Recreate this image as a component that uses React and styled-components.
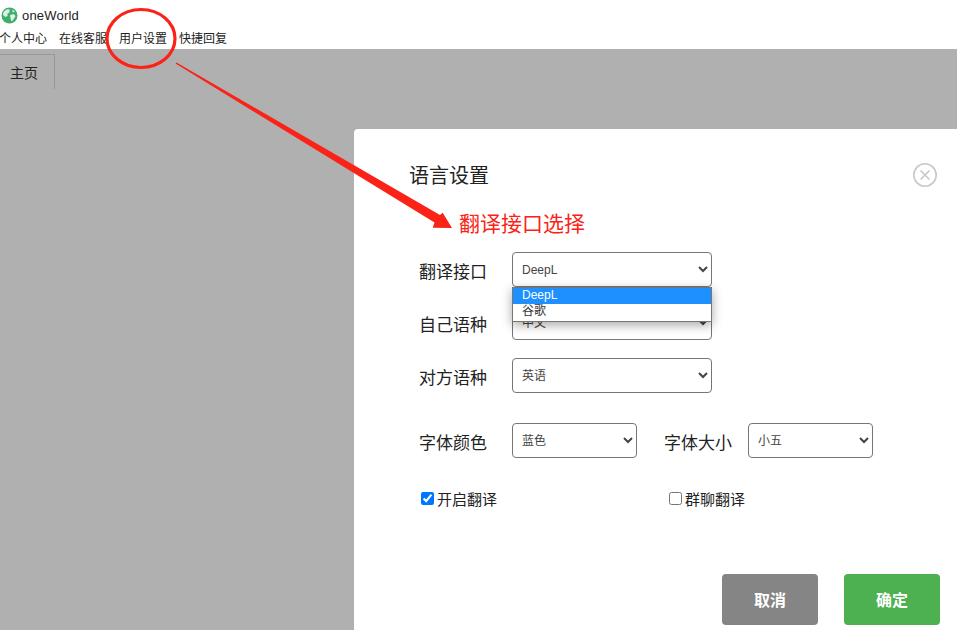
import React from 'react';
import styled, { createGlobalStyle } from 'styled-components';

const GlobalStyle = createGlobalStyle`
  html, body {
    margin: 0;
    height: 100%;
    overflow: hidden;
    background: #fff;
    font-family: 'Liberation Sans', 'Noto Sans CJK SC', sans-serif;
  }
  #root {
    height: 100%;
  }
`;

const Logo = () => (
  <svg width="17" height="17" viewBox="0 0 17 17">
    <circle cx="8.5" cy="8.5" r="8" fill="#3dae6c" />
    <path
      d="M2.5 5 L5.5 2.5 L8.5 2.2 L8.5 5.5 L6.5 6.5 L6.5 9 L4.5 10 L2 8 Z M9 8 L12.5 7 L14.5 9 L12.5 12.5 L10.5 14.5 L9.5 11.5 Z M11 2.5 L14 4.5 L12 5.5 Z"
      fill="#dff1e6"
    />
  </svg>
);

const App = () => {
  return (
    <Page>
      <GlobalStyle />
      <Header>
        <Brand>
          <Logo />
          <span>oneWorld</span>
        </Brand>
        <Menu>
          <MenuItem>个人中心</MenuItem>
          <MenuItem>在线客服</MenuItem>
          <MenuItem>用户设置</MenuItem>
          <MenuItem>快捷回复</MenuItem>
        </Menu>
      </Header>
      <Workspace>
        <Tab>主页</Tab>
      </Workspace>

      <Modal>
        <TitleRow>
          <Title>语言设置</Title>
          <CloseButton>
            <svg width="26" height="26" viewBox="0 0 26 26" fill="none" stroke="#c8c8c8">
              <circle cx="13" cy="13" r="11.2" strokeWidth="1.6" />
              <path d="M8.5 8.5 L17.5 17.5 M17.5 8.5 L8.5 17.5" strokeWidth="1.6" />
            </svg>
          </CloseButton>
        </TitleRow>
        <Hint>翻译接口选择</Hint>
        <Form>
          <Row>
            <Label>翻译接口</Label>
            <SelectWrap>
              <Select defaultValue="DeepL">
                <option>DeepL</option>
                <option>谷歌</option>
              </Select>
              <Popup>
                <PopupOption $active>DeepL</PopupOption>
                <PopupOption>谷歌</PopupOption>
              </Popup>
            </SelectWrap>
          </Row>
          <Row>
            <Label>自己语种</Label>
            <Select defaultValue="中文">
              <option>中文</option>
              <option>英语</option>
            </Select>
          </Row>
          <Row>
            <Label>对方语种</Label>
            <Select defaultValue="英语">
              <option>中文</option>
              <option>英语</option>
            </Select>
          </Row>
          <FontRow>
            <Label>字体颜色</Label>
            <Select $small defaultValue="蓝色">
              <option>蓝色</option>
              <option>黑色</option>
            </Select>
            <SideLabel>字体大小</SideLabel>
            <Select $small defaultValue="小五">
              <option>小五</option>
              <option>五号</option>
            </Select>
          </FontRow>
        </Form>
        <Checks>
          <Check>
            <input type="checkbox" defaultChecked />
            开启翻译
          </Check>
          <Check>
            <input type="checkbox" />
            群聊翻译
          </Check>
        </Checks>
        <Footer>
          <Button $color="#858585">取消</Button>
          <Button $color="#4db151">确定</Button>
        </Footer>
      </Modal>

      {/* red marks drawn on top of the screenshot */}
      <Marks width="957" height="630" viewBox="0 0 957 630">
        <ellipse cx="141" cy="38.5" rx="34" ry="29" fill="none" stroke="#fb2317" strokeWidth="3.2" />
        <path
          d="M175.5 63.5 L176.5 62.5 L440 215 L442.7 212.7 L452 228 L432.7 227.7 L434.5 222.5 Z"
          fill="#fb2317"
        />
      </Marks>
    </Page>
  );
};

const Page = styled.div`
  position: relative;
  display: flex;
  flex-direction: column;
  height: 100%;
  overflow: hidden;
`;

const Header = styled.header`
  flex: none;
  height: 49px;
  background: #fff;
  color: #222;
`;

const Brand = styled.div`
  display: flex;
  align-items: center;
  gap: 4px;
  height: 30px;
  padding-left: 1px;
  font-size: 13px;
  letter-spacing: 0.2px;
`;

const Menu = styled.nav`
  display: flex;
  gap: 12px;
  height: 19px;
  margin-left: -1px;
`;

const MenuItem = styled.span`
  font-size: 12px;
  line-height: 19px;
`;

const Workspace = styled.main`
  flex: 1;
  padding-top: 5px;
  background: #b0b0b0;
`;

const Tab = styled.div`
  box-sizing: border-box;
  width: 55px;
  height: 35px;
  padding-left: 10px;
  border-top: 1px solid #989898;
  border-right: 1px solid #989898;
  color: #222;
  font-size: 14px;
  line-height: 37px;
`;

const Modal = styled.section`
  position: absolute;
  top: 129px;
  left: 354px;
  right: 0;
  bottom: 0;
  box-sizing: border-box;
  padding: 33px 17px 0 55px;
  border-radius: 4px 0 0 0;
  background: #fff;
  color: #222;
`;

const TitleRow = styled.div`
  display: flex;
  justify-content: space-between;
  align-items: center;
  height: 28px;
`;

const Title = styled.h2`
  margin: 0;
  font-size: 20px;
  font-weight: 400;
  line-height: 28px;
`;

const CloseButton = styled.div`
  display: flex;
  margin-top: -2px;
  margin-right: 2px;
`;

const Hint = styled.div`
  margin: 19px 0 13px 50px;
  color: #fb2317;
  font-size: 21px;
  line-height: 30px;
`;

const Form = styled.div`
  display: flex;
  flex-direction: column;
  gap: 18px;
  padding-left: 10px;
`;

const Row = styled.div`
  display: flex;
  align-items: center;
  height: 35px;
`;

const FontRow = styled(Row)`
  margin-top: 12px;
`;

const Label = styled.label`
  width: 93px;
  padding-top: 2px;
  font-size: 17px;
`;

const SideLabel = styled(Label)`
  width: 84px;
  margin-left: 27px;
`;

const SelectWrap = styled.div`
  position: relative;
  z-index: 1;
`;

const Select = styled.select`
  display: block;
  box-sizing: border-box;
  width: ${props => (props.$small ? '125px' : '200px')};
  height: 35px;
  padding: 0 5px;
  border: 1px solid #767676;
  border-radius: 4px;
  background: #fff;
  color: #444;
  font-family: inherit;
  font-size: 12px;
`;

const Popup = styled.div`
  position: absolute;
  top: 100%;
  left: 0;
  box-sizing: border-box;
  width: 200px;
  height: 35px;
  border: 1px solid #767676;
  background: #fff;
  box-shadow: 0 3px 10px rgba(0, 0, 0, 0.35);
`;

const PopupOption = styled.div`
  height: 16px;
  padding-left: 9px;
  background: ${props => (props.$active ? '#1e90ff' : '#fff')};
  color: ${props => (props.$active ? '#fff' : '#333')};
  font-size: 12px;
  line-height: 15px;
`;

const Checks = styled.div`
  display: flex;
  margin-top: 31px;
  padding-left: 12px;
`;

const Check = styled.label`
  display: flex;
  align-items: center;
  width: 248px;
  height: 18px;
  font-size: 15px;

  input {
    width: 13px;
    height: 13px;
    margin: 0 3px 0 0;
  }
`;

const Footer = styled.div`
  display: flex;
  justify-content: flex-end;
  gap: 26px;
  margin-top: 67px;
`;

const Button = styled.button`
  width: 96px;
  height: 51px;
  padding: 0 0 2px;
  border: 0;
  border-radius: 4px;
  background: ${props => props.$color};
  color: #fff;
  font-family: inherit;
  font-size: 16px;
  font-weight: 700;
`;

const Marks = styled.svg`
  position: absolute;
  top: 0;
  left: 0;
  z-index: 2;
  pointer-events: none;
`;

export default App;
